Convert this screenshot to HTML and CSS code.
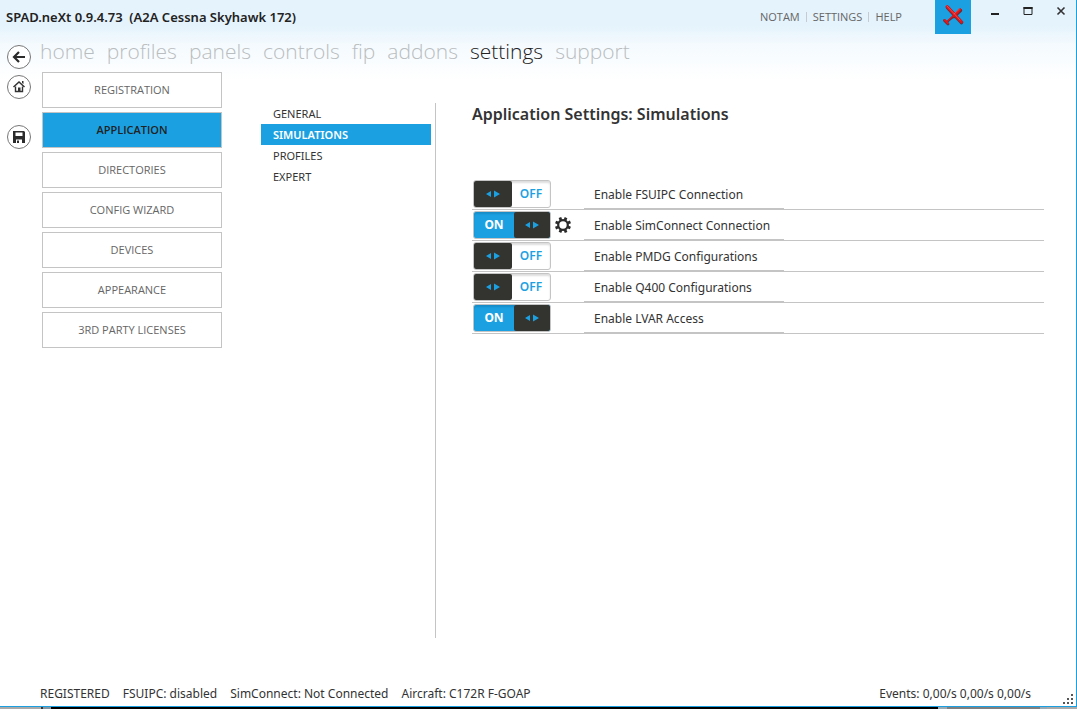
FILE: index.html
```html
<!DOCTYPE html>
<html lang="en">
<head>
<meta charset="utf-8">
<title>SPAD.neXt</title>
<meta name="viewport" content="width=device-width, initial-scale=1">
<link rel="stylesheet" href="styles.css">
</head>
<body>
<svg class="defs" width="0" height="0" aria-hidden="true">
  <symbol id="arrows" viewBox="0 0 14 8"><path d="M0 4 5 1v6zM14 4 8 .5v7z" fill="currentColor"/></symbol>
</svg>
<div class="window">
  <header class="titlebar">
    <h1 class="title">SPAD.neXt 0.9.4.73&nbsp; (A2A Cessna Skyhawk 172)</h1>
    <nav class="links" aria-label="Window links">
      <a class="link" href="#notam">NOTAM</a>
      <a class="link" href="#settings">SETTINGS</a>
      <a class="link" href="#help">HELP</a>
    </nav>
    <button class="plane" aria-label="Simulator connection">
      <svg width="36" height="34" viewBox="0 0 36 34" fill="none" stroke-linecap="round">
        <g stroke="#6d2a33"><path d="M12.500 7.500 26.500 22.500" stroke-width="3.600"/><path d="m25.500 10.500-6.500 6" stroke-width="3.400"/><path d="m18 17-6 5" stroke-width="2"/><path d="m9.500 20.500 3.500 3.500" stroke-width="2.800"/></g>
        <g stroke="#e0161b"><path d="M12 6.500 26.500 22" stroke-width="2.800"/><path d="m25 9.500-6.500 6.500" stroke-width="2.600"/><path d="m18 16-6 5.500" stroke-width="1.400"/><path d="m9.500 20 3.500 3.500" stroke-width="1.800"/></g>
        <path d="m12 6 13 14M24.500 9l-5.500 5" stroke="#f4706c" stroke-width=".6"/>
      </svg>
    </button>
    <div class="controls">
      <button class="control" aria-label="Minimize"><svg width="10" height="10" viewBox="0 0 10 10"><path d="M1 7h8v2H1z" fill="#222"/></svg></button>
      <button class="control" aria-label="Maximize"><svg width="10" height="10" viewBox="0 0 10 10"><path d="M1 1v7.500h8V1" fill="none" stroke="#222"/><path d="M.5 1h9v2h-9z" fill="#222"/></svg></button>
      <button class="control" aria-label="Close"><svg width="10" height="10" viewBox="0 0 10 10"><path d="m1.500 1.500 7 7m0-7-7 7" stroke="#333" stroke-width="1.600"/></svg></button>
    </div>
  </header>

  <div class="main">
    <div class="rail">
      <button class="round" aria-label="Back"><svg width="24" height="24" viewBox="0 0 24 24"><path d="M18 12H7.500M12 7l-5 5 5 5" fill="none" stroke="#2b2b2b" stroke-width="2.200"/></svg></button>
      <button class="round" aria-label="Home"><svg width="24" height="24" viewBox="0 0 24 24" fill="none" stroke="#333"><path d="m6.500 12 5.500-5 5.500 5" stroke-width="1.500"/><path d="M8.500 11.500v5h7v-5" stroke-width="1.400"/><path d="M15 6h1.500v3L15 8zM11 12.500h2.500V17H11z" fill="#333" stroke="none"/></svg></button>
      <button class="round round-save" aria-label="Save"><svg width="24" height="24" viewBox="0 0 24 24"><path d="M6 6h11l1 1v11H6z" fill="#2b2b2b"/><path d="M8.500 7.500h7V11h-7zM9 14.500h6V18H9z" fill="#fff"/><path d="M10 15.500h2V18h-2z" fill="#2b2b2b"/></svg></button>
    </div>

    <div class="page">
      <nav class="tabs" aria-label="Sections">
        <a class="tab" href="#home">home</a>
        <a class="tab" href="#profiles">profiles</a>
        <a class="tab" href="#panels">panels</a>
        <a class="tab" href="#controls">controls</a>
        <a class="tab" href="#fip">fip</a>
        <a class="tab" href="#addons">addons</a>
        <a class="tab tab-active" href="#settings" aria-current="page">settings</a>
        <a class="tab" href="#support">support</a>
      </nav>

      <div class="columns">
        <div class="categories">
          <button class="category">REGISTRATION</button>
          <button class="category category-active">APPLICATION</button>
          <button class="category">DIRECTORIES</button>
          <button class="category">CONFIG WIZARD</button>
          <button class="category">DEVICES</button>
          <button class="category">APPEARANCE</button>
          <button class="category">3RD PARTY LICENSES</button>
        </div>

        <nav class="topics" aria-label="Application settings">
          <a class="topic" href="#general">GENERAL</a>
          <a class="topic topic-active" href="#simulations" aria-current="page">SIMULATIONS</a>
          <a class="topic" href="#app-profiles">PROFILES</a>
          <a class="topic" href="#expert">EXPERT</a>
        </nav>

        <main class="content">
          <h2 class="heading">Application Settings: Simulations</h2>
          <div class="options">
            <div class="option">
              <div class="switch"><input class="switch-input" type="checkbox" id="fsuipc"><span class="thumb"><svg width="14" height="8"><use href="#arrows"/></svg></span><span class="state">OFF</span></div>
              <label class="name" for="fsuipc">Enable FSUIPC Connection</label>
            </div>
            <div class="option">
              <div class="switch switch-on"><input class="switch-input" type="checkbox" id="simconnect" checked><span class="state">ON</span><span class="thumb"><svg width="14" height="8"><use href="#arrows"/></svg></span></div>
              <button class="gear" aria-label="SimConnect options"><svg width="16" height="16" viewBox="-8 -8 16 16"><g fill="none" stroke="#2b2b2b"><circle r="4.800" stroke-width="2.200"/><path d="M0-8v3M0 8V5M-8 0h3M8 0H5M-5.700-5.700l2 2M5.700 5.700l-2-2M5.700-5.700l-2 2M-5.700 5.700l2-2" stroke-width="2.800" transform="rotate(22.500)"/></g></svg></button>
              <label class="name" for="simconnect">Enable SimConnect Connection</label>
            </div>
            <div class="option">
              <div class="switch"><input class="switch-input" type="checkbox" id="pmdg"><span class="thumb"><svg width="14" height="8"><use href="#arrows"/></svg></span><span class="state">OFF</span></div>
              <label class="name" for="pmdg">Enable PMDG Configurations</label>
            </div>
            <div class="option">
              <div class="switch"><input class="switch-input" type="checkbox" id="q400"><span class="thumb"><svg width="14" height="8"><use href="#arrows"/></svg></span><span class="state">OFF</span></div>
              <label class="name" for="q400">Enable Q400 Configurations</label>
            </div>
            <div class="option">
              <div class="switch switch-on"><input class="switch-input" type="checkbox" id="lvar" checked><span class="state">ON</span><span class="thumb"><svg width="14" height="8"><use href="#arrows"/></svg></span></div>
              <label class="name" for="lvar">Enable LVAR Access</label>
            </div>
          </div>
        </main>
      </div>
    </div>
  </div>

  <footer class="status">
    <span>REGISTERED</span>
    <span>FSUIPC: disabled</span>
    <span>SimConnect: Not Connected</span>
    <span>Aircraft: C172R F-GOAP</span>
    <span class="events">Events: 0,00/s 0,00/s 0,00/s</span>
    <svg class="grip" width="10" height="10" viewBox="0 0 10 10"><path d="M8 0h2v2H8zM4 4h2v2H4zM8 4h2v2H8zM0 8h2v2H0zM4 8h2v2H4zM8 8h2v2H8z" fill="#555"/></svg>
  </footer>
</div>
<div class="desktop"></div>
</body>
</html>
```

FILE: styles.css
```css
* { box-sizing: border-box; }

body {
  margin: 0;
  min-height: 100vh;
  display: flex;
  flex-direction: column;
  font-family: "Noto Sans", "Open Sans", sans-serif;
  font-size: 12px;
  color: #333;
}

button {
  font: inherit;
  color: inherit;
  background: none;
  border: 0;
  padding: 0;
}

a { color: inherit; text-decoration: none; }
svg { display: block; }
.defs { position: absolute; }

.window {
  flex: 1;
  display: flex;
  flex-direction: column;
  background: linear-gradient(#e5f3fc 0, #e5f3fc 26px, #f4fafe 44px, #fff 80px);
  border-right: 1px solid #1ba1e2;
  border-bottom: 1px solid #1ba1e2;
}

.titlebar {
  display: flex;
  align-items: flex-start;
  height: 34px;
  padding-left: 6px;
}

.title {
  margin: 0;
  flex: 1;
  font-size: 13px;
  line-height: 34px;
  font-weight: 600;
  color: #222;
}

.links {
  display: flex;
  align-items: center;
  height: 34px;
  margin-right: 33px;
  font-family: "Open Sans", "Noto Sans", sans-serif;
  font-size: 11px;
  color: #666;
}

.link { line-height: 10px; }
.link + .link {
  border-left: 1px solid #c5ccd0;
  margin-left: 6px;
  padding-left: 6px;
}

.plane { width: 36px; height: 34px; background: #1ba1e2; }

.controls { display: flex; gap: 3px; padding-left: 9px; }
.control {
  width: 30px;
  height: 21px;
  display: flex;
  align-items: center;
  justify-content: center;
}

.main { flex: 1; display: flex; }

.rail {
  width: 40px;
  padding: 11px 0 0 7px;
  display: flex;
  flex-direction: column;
  gap: 6px;
}

.round {
  width: 24px;
  height: 24px;
  border: 1px solid #777;
  border-radius: 50%;
  background: #fff;
  display: flex;
  align-items: center;
  justify-content: center;
}
.round svg { flex: none; }
.round-save { margin-top: 20px; }

.page { flex: 1; display: flex; flex-direction: column; }

.tabs {
  display: flex;
  gap: 12px;
  height: 38px;
  font-family: "Open Sans", "Noto Sans", sans-serif;
  font-size: 21px;
  line-height: 34px;
  font-weight: 300;
  color: #b9bdbf;
}
.tab-active { color: #222; }

.columns { flex: 1; display: flex; }

.categories {
  width: 182px;
  padding-left: 2px;
  display: flex;
  flex-direction: column;
  gap: 4px;
}

.category {
  height: 36px;
  padding-bottom: 2px;
  border: 1px solid #c4c4c4;
  background: #fff;
  font-family: "Open Sans", "Noto Sans", sans-serif;
  font-size: 11px;
  color: #666;
}
.category-active {
  background: #1ba1e2;
  font-weight: 600;
  color: #222;
}

.topics {
  width: 214px;
  margin: 31px 0 40px;
  padding: 0 4px 0 39px;
  border-right: 1px solid #c4c4c4;
  font-size: 11px;
}
.topic { display: block; padding-left: 12px; line-height: 21px; }
.topic-active { background: #1ba1e2; color: #fff; font-weight: 600; }

.content { flex: 1; padding: 31px 32px 0 36px; }

.heading {
  margin: 0 0 54px;
  font-size: 16px;
  line-height: 22px;
  font-weight: 600;
}

.option {
  display: flex;
  align-items: flex-start;
  height: 31px;
  padding: 1px 0 0 1px;
  border-bottom: 1px solid #c4c4c4;
}

.switch {
  position: relative;
  display: flex;
  width: 78px;
  height: 28px;
  border: 1px solid #c4c4c4;
  border-radius: 3px;
  background: #fff;
  color: #1ba1e2;
  box-shadow: inset 0 2px 2px #ddd;
  font-weight: 600;
  line-height: 26px;
}
.switch-on { background: #1ba1e2; box-shadow: inset 0 2px 2px #178dc8; }
.switch-on .state { color: #fff; font-weight: 700; }
.switch-input {
  position: absolute;
  inset: 0;
  width: 100%;
  height: 100%;
  margin: 0;
  opacity: 0;
}
.thumb {
  width: 38px;
  display: flex;
  align-items: center;
  justify-content: center;
  border-radius: 2px;
  background: #333330;
}
.switch-on .thumb { width: 36px; }
.state { flex: 1; text-align: center; }

.gear { margin: 6px 0 0 4px; }

.name {
  width: 200px;
  height: 29px;
  margin-left: auto;
  margin-right: calc(100% - 311px);
  padding-left: 10px;
  border-bottom: 1px solid #c4c4c4;
  line-height: 30px;
}

.status {
  display: flex;
  gap: 13px;
  height: 28px;
  padding: 0 3px 0 40px;
  line-height: 32px;
}
.events { margin-left: auto; }
.grip { margin: 16px 0 0 19px; }

.desktop {
  height: 2px;
  background: linear-gradient(90deg, #aaa 41px, #333 41px 43px, #8497a3 43px 51px, #000 51px 938px, #9aaab4 938px 947px, #808080 947px 1040px, #9aaab4 1040px 1047px, #aaa 1047px);
}
```
